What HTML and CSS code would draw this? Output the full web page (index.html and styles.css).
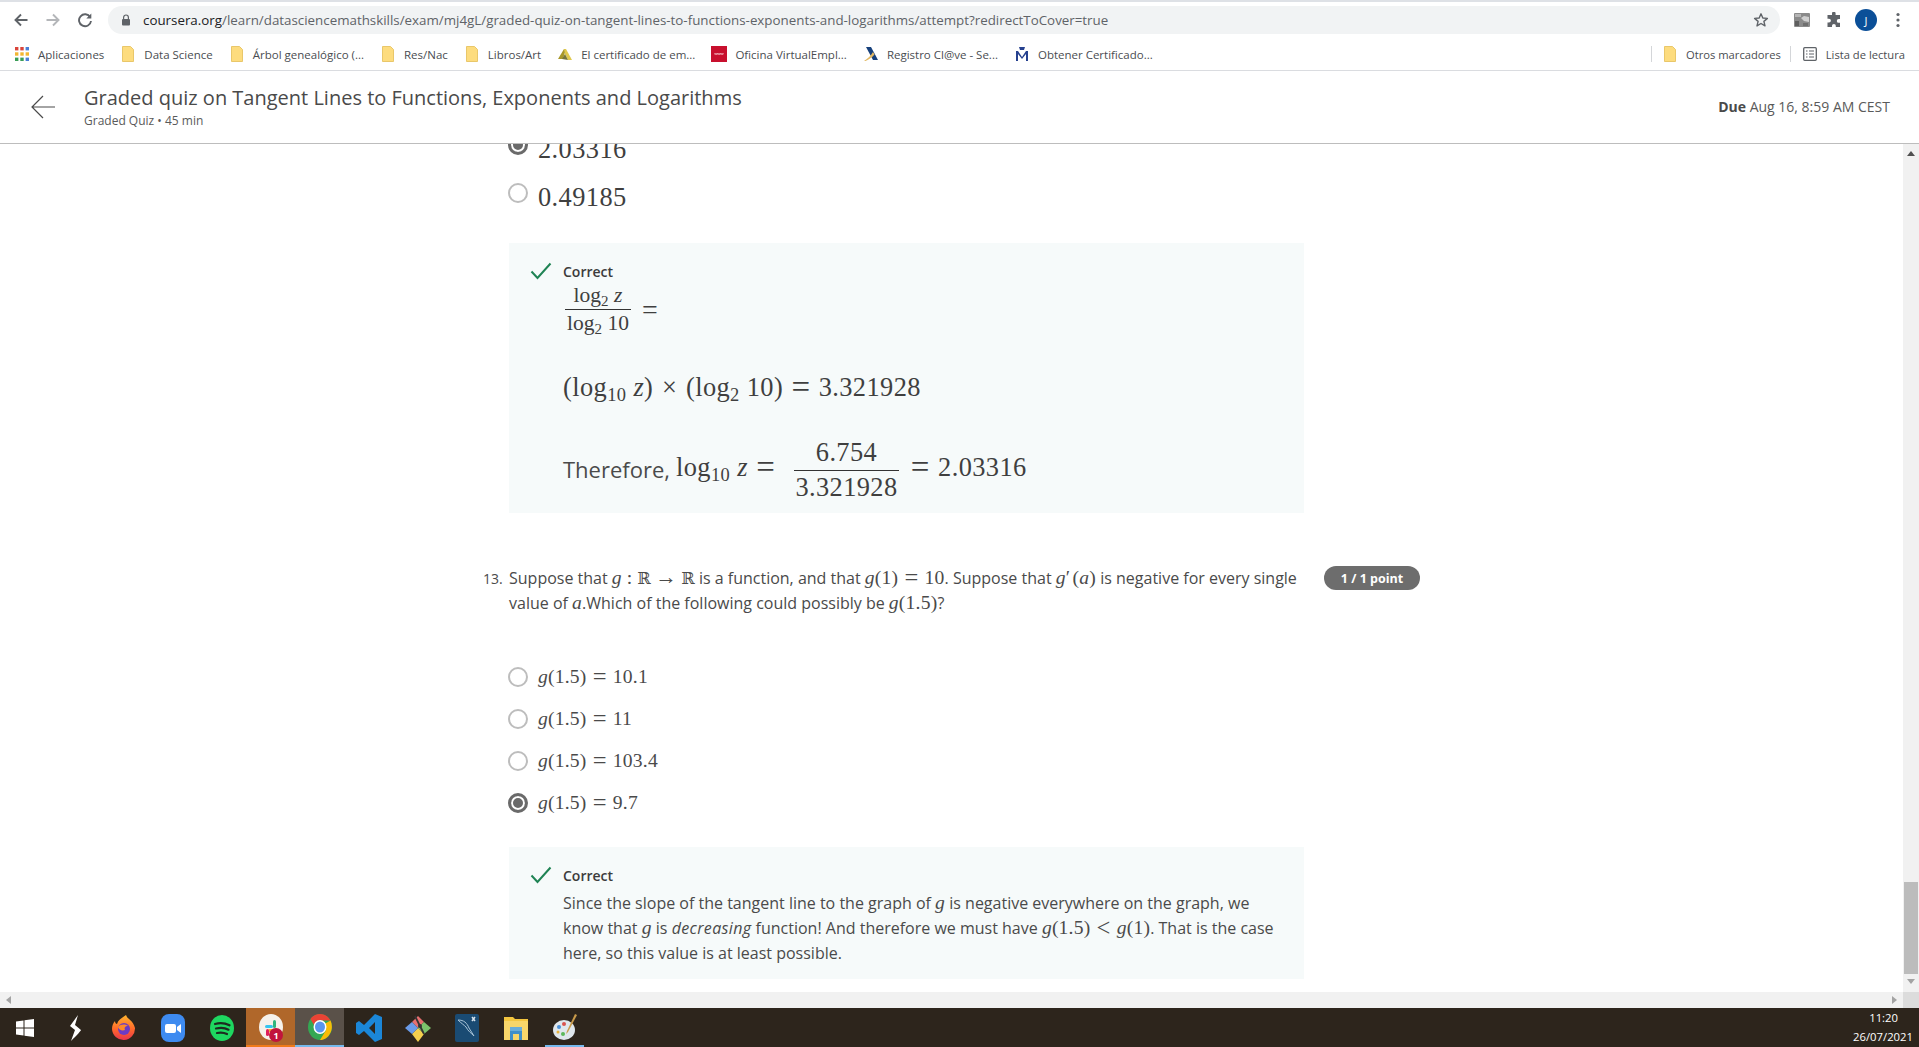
FILE: index.html
```html
<!DOCTYPE html>
<html lang="en">
<head>
<meta charset="utf-8">
<title>Graded quiz on Tangent Lines to Functions, Exponents and Logarithms</title>
<link rel="stylesheet" href="styles.css">
</head>
<body>
<div class="browser">
  <div class="tabstrip"></div>
  <div class="toolbar">
    <span class="tool"><svg width="16" height="16" viewBox="0 0 16 16"><path d="M14.5 8H2.5M8 2.5 2.5 8 8 13.5" fill="none" stroke="#5f6368" stroke-width="1.9"/></svg></span>
    <span class="tool"><svg width="16" height="16" viewBox="0 0 16 16"><path d="M1.5 8h12M8 2.5 13.5 8 8 13.5" fill="none" stroke="#b4b6b9" stroke-width="1.9"/></svg></span>
    <span class="tool"><svg width="16" height="16" viewBox="0 0 16 16"><path d="M13.2 5.2A6 6 0 1 0 14 9" fill="none" stroke="#5f6368" stroke-width="1.9"/><path d="M14.3 1.6v5h-5z" fill="#5f6368"/></svg></span>
    <div class="omnibox">
      <svg class="lock" width="10" height="12" viewBox="0 0 10 12"><path d="M2.6 5V3.4a2.4 2.4 0 0 1 4.8 0V5" fill="none" stroke="#5f6368" stroke-width="1.2"/><rect x="1" y="5" width="8" height="6.6" rx="1" fill="#5f6368"/></svg>
      <span class="url"><span class="host">coursera.org</span>/learn/datasciencemathskills/exam/mj4gL/graded-quiz-on-tangent-lines-to-functions-exponents-and-logarithms/attempt?redirectToCover=true</span>
      <svg class="star" width="16" height="16" viewBox="0 0 16 16"><path d="M8 1.8 9.8 6l4.6.4-3.5 3 1.1 4.5L8 11.500 4 13.900l1.100-4.500-3.500-3L6.200 6z" fill="none" stroke="#5f6368" stroke-width="1.400" stroke-linejoin="round"/></svg>
    </div>
    <span class="tool"><svg width="16" height="14" viewBox="0 0 16 14"><rect width="16" height="14" rx="1" fill="#8a8a8a"/><path d="M1 1h6v3H1z" fill="#b5b5b5"/><path d="M7 5l3-2 5 1v5l-5-1z" fill="#cfcfcf"/><rect x="1" y="8" width="4" height="5" fill="#5f5f5f"/><rect x="9" y="10" width="5" height="3" fill="#6f6f6f"/></svg></span>
    <span class="tool"><svg width="16" height="16" viewBox="0 0 16 16"><path d="M6 1.500a1.800 1.800 0 0 1 3.600 0V3H14v4h-1.300a1.900 1.900 0 0 0 0 3.800H14V15H9.800v-1.200a1.900 1.900 0 0 0-3.800 0V15H1.500v-4.500H3a1.900 1.900 0 0 0 0-3.800H1.500V3H6z" fill="#5f6368"/></svg></span>
    <span class="tool"><span class="avatar">J</span></span>
    <span class="tool"><svg width="4" height="16" viewBox="0 0 4 16"><circle cx="2" cy="2.500" r="1.600" fill="#5f6368"/><circle cx="2" cy="8" r="1.600" fill="#5f6368"/><circle cx="2" cy="13.500" r="1.600" fill="#5f6368"/></svg></span>
  </div>
  <div class="bookmarks">
    <div class="bm bm-apps">
      <svg width="14" height="14" viewBox="0 0 14 14"><g fill="#d9443a"><rect width="3.400" height="3.400"/><rect x="5.300" width="3.400" height="3.400"/><rect x="10.600" width="3.400" height="3.400" fill="#4a7fd6"/></g><g fill="#f2b632"><rect y="5.300" width="3.400" height="3.400"/><rect x="5.300" y="5.300" width="3.400" height="3.400"/><rect x="10.600" y="5.300" width="3.400" height="3.400"/></g><g fill="#3a9d57"><rect y="10.600" width="3.400" height="3.400"/><rect x="5.300" y="10.600" width="3.400" height="3.400"/><rect x="10.600" y="10.600" width="3.400" height="3.400" fill="#4a7fd6"/></g></svg>
      <span>Aplicaciones</span>
    </div>
    <div class="bm"><svg class="folder" width="12" height="16" viewBox="0 0 12 16"><path d="M.5.500h8l3 3v12H.5z" fill="#fddc7e" stroke="#e9c76a"/></svg><span>Data Science</span></div>
    <div class="bm"><svg class="folder" width="12" height="16" viewBox="0 0 12 16"><path d="M.5.500h8l3 3v12H.5z" fill="#fddc7e" stroke="#e9c76a"/></svg><span>Árbol genealógico (...</span></div>
    <div class="bm"><svg class="folder" width="12" height="16" viewBox="0 0 12 16"><path d="M.5.500h8l3 3v12H.5z" fill="#fddc7e" stroke="#e9c76a"/></svg><span>Res/Nac</span></div>
    <div class="bm"><svg class="folder" width="12" height="16" viewBox="0 0 12 16"><path d="M.5.500h8l3 3v12H.5z" fill="#fddc7e" stroke="#e9c76a"/></svg><span>Libros/Art</span></div>
    <div class="bm bm-fav"><svg width="16" height="16" viewBox="0 0 16 16"><path d="M1 13 7 3l2 0-3 10z" fill="#a8982a"/><path d="M7 3h2l6 11h-4L8 8z" fill="#e0c94e"/><path d="M5 13l3-5 3 6z" fill="#77763a"/></svg><span>El certificado de em...</span></div>
    <div class="bm bm-fav"><svg width="16" height="16" viewBox="0 0 16 16"><rect width="16" height="16" fill="#c8102e"/><path d="M3.500 7l.7 1.800L5 7l.7 1.800L6.500 7l.7 1.800L8 7l.7 1.800L9.500 7l.7 1.800L11 7l.7 1.800.8-1.800" fill="none" stroke="#f6c9cf" stroke-width=".6"/></svg><span>Oficina VirtualEmpl...</span></div>
    <div class="bm bm-fav"><svg width="16" height="16" viewBox="0 0 16 16"><path d="M3 1h5l7 13h-5z" fill="#17417c"/><path d="M1 15c3-2 7-5 9-9l1.500 2.500C9 11.500 5 14 2.500 15z" fill="#e2b862"/></svg><span>Registro Cl@ve - Se...</span></div>
    <div class="bm bm-fav"><svg width="16" height="16" viewBox="0 0 16 16"><path d="M5 1h6l-1 3H6z" fill="#26418f"/><path d="M2 15V5h2l4 6 4-6h2v10h-2V8l-4 5-4-5v7z" fill="#26418f"/></svg><span>Obtener Certificado...</span></div>
    <div class="bm-right">
      <span class="bm-sep"></span>
      <div class="bm bm-others"><svg class="folder" width="12" height="16" viewBox="0 0 12 16"><path d="M.5.500h8l3 3v12H.5z" fill="#fddc7e" stroke="#e9c76a"/></svg><span>Otros marcadores</span></div>
      <span class="bm-sep"></span>
      <div class="bm bm-list"><svg width="14" height="14" viewBox="0 0 14 14"><rect x=".7" y=".7" width="12.600" height="12.600" rx="1" fill="none" stroke="#5f6368" stroke-width="1.300"/><path d="M3 4h1.500M3 7h1.500M3 10h1.500M6 4h5M6 7h5M6 10h5" stroke="#5f6368" stroke-width="1.200"/></svg><span>Lista de lectura</span></div>
    </div>
  </div>
</div>

<header class="quiz-header">
  <svg class="back" width="26" height="24" viewBox="0 0 26 24"><path d="M25 12H2M13 1 2 12l11 11" fill="none" stroke="#4a4a4a" stroke-width="1.200"/></svg>
  <div class="quiz-title">
    <h1>Graded quiz on Tangent Lines to Functions, Exponents and Logarithms</h1>
    <p>Graded Quiz • 45 min</p>
  </div>
  <div class="due"><b>Due</b> Aug 16, 8:59 AM CEST</div>
</header>

<div class="viewport">
  <main class="page">
    <div class="sheet">
      <div class="option big opt-clipped"><span class="radio on"></span><span class="mn">2.03316</span></div>
      <div class="option big"><span class="radio"></span><span class="mn">0.49185</span></div>

      <section class="feedback fb-first">
        <svg class="tick" width="22" height="18" viewBox="0 0 22 18"><path d="M1.500 9.500 7.500 16 20.500 1.500" fill="none" stroke="#1f8354" stroke-width="2"/></svg>
        <div class="fb-body">
          <div class="fb-label">Correct</div>
          <div class="eq eq-a">
            <span class="frac"><span class="num">log<sub>2</sub> <i>z</i></span><span class="den">log<sub>2</sub> 10</span></span><span class="rel">=</span>
          </div>
          <div class="eq eq-b"><span class="mn">(log<sub>10</sub> <i>z</i>)<span class="bin">×</span>(log<sub>2</sub> 10)<span class="rel">=</span>3.321928</span></div>
          <div class="eq eq-c"><span class="lead">Therefore,</span><span class="mn">log<sub>10</sub> <i>z</i><span class="rel">=</span><span class="frac"><span class="num">6.754</span><span class="den">3.321928</span></span><span class="rel">=</span>2.03316</span></div>
        </div>
      </section>

      <section class="question">
        <span class="qnum">13.</span>
        <p class="qtext">Suppose that <span class="m"><i>g</i><span class="colon">:</span><span class="bb">ℝ</span><span class="rel rel-arrow">→</span><span class="bb">ℝ</span></span> is a function, and that <span class="m"><i>g</i>(1)<span class="rel">=</span>10</span>. Suppose that <span class="m"><i>g</i><span class="prime">′</span>(<i>a</i>)</span> is negative for every single value of <span class="m"><i>a</i></span>.Which of the following could possibly be <span class="m"><i>g</i>(1.5)</span>?</p>
        <span class="pill">1 / 1 point</span>
      </section>

      <div class="options">
        <div class="option"><span class="radio"></span><span class="m opt"><i>g</i>(1.5)<span class="rel">=</span>10.1</span></div>
        <div class="option"><span class="radio"></span><span class="m opt"><i>g</i>(1.5)<span class="rel">=</span>11</span></div>
        <div class="option"><span class="radio"></span><span class="m opt"><i>g</i>(1.5)<span class="rel">=</span>103.4</span></div>
        <div class="option"><span class="radio on"></span><span class="m opt"><i>g</i>(1.5)<span class="rel">=</span>9.7</span></div>
      </div>

      <section class="feedback fb-second">
        <svg class="tick" width="22" height="18" viewBox="0 0 22 18"><path d="M1.500 9.500 7.500 16 20.500 1.500" fill="none" stroke="#1f8354" stroke-width="2"/></svg>
        <div class="fb-body">
          <div class="fb-label">Correct</div>
          <p class="fb-text">Since the slope of the tangent line to the graph of <span class="m"><i>g</i></span> is negative everywhere on the graph, we know that <span class="m"><i>g</i></span> is <em>decreasing</em> function! And therefore we must have <span class="m"><i>g</i>(1.5)<span class="rel">&lt;</span><i>g</i>(1)</span>. That is the case here, so this value is at least possible.</p>
        </div>
      </section>
    </div>
  </main>
  <div class="vscroll">
    <svg class="arrow" width="8" height="5" viewBox="0 0 8 5"><path d="M4 0l4 5H0z" fill="#505050"/></svg>
    <span class="vthumb"></span>
    <svg class="arrow" width="8" height="5" viewBox="0 0 8 5"><path d="M4 5 8 0H0z" fill="#a3a3a3"/></svg>
  </div>
  <div class="hscroll">
    <svg width="5" height="8" viewBox="0 0 5 8"><path d="M0 4l5-4v8z" fill="#a3a3a3"/></svg>
    <svg width="5" height="8" viewBox="0 0 5 8"><path d="M5 4 0 0v8z" fill="#a3a3a3"/></svg>
  </div>
  <div class="corner"></div>
</div>

<footer class="taskbar">
  <span class="cell cell-first"><svg width="18" height="18" viewBox="0 0 18 18"><path d="M0 2.500 7.500 1.400V8.500H0zM8.500 1.300 18 0v8.500H8.500zM0 9.500h7.500v7.100L0 15.500zM8.500 9.500H18V18l-9.500-1.300z" fill="#fff"/></svg></span>
  <span class="cell"><svg width="12" height="26" viewBox="0 0 12 26"><path d="M9 0 1 11l5 4-4 11c2-2 10-10 10-11L6 10z" fill="#fff"/></svg></span>
  <span class="cell"><svg width="24" height="26" viewBox="0 0 24 26"><defs><linearGradient id="ff" x1="0" y1="0" x2="0" y2="1"><stop offset="0" stop-color="#ffb52e"/><stop offset=".55" stop-color="#ff6a2a"/><stop offset="1" stop-color="#e8354c"/></linearGradient></defs><path d="M14 0c1 4 7 5 9 13a11.500 11.500 0 1 1-23 1c0-3 1-6 3-8 0 2 1 3 2 3 1-4 5-6 9-9z" fill="url(#ff)"/><circle cx="12" cy="14" r="6" fill="#6b3bc4"/><path d="M6 12c3-3 7-3 10-1-3 0-4 2-3 4-3 1-6 0-7-3z" fill="#ff8a2a"/></svg></span>
  <span class="cell"><svg width="24" height="28" viewBox="0 0 24 28"><rect width="24" height="28" rx="8" fill="#3e8bf0"/><rect x="4" y="10" width="11" height="9" rx="2" fill="#fff"/><path d="M16 13l4-3v9l-4-3z" fill="#fff"/></svg></span>
  <span class="cell"><svg width="24" height="26" viewBox="0 0 24 26"><ellipse cx="12" cy="13" rx="12" ry="13" fill="#1ed760"/><path d="M5 9c5-1.500 10-1 14.500 1.300M6 13.500c4-1 9-.8 12.500 1.200M7 18c3.500-.8 7-.5 10 1" fill="none" stroke="#1d2b20" stroke-width="2.200" stroke-linecap="round"/></svg></span>
  <span class="cell cell-slack">
    <svg width="24" height="26" viewBox="0 0 24 26"><ellipse cx="12" cy="13" rx="12" ry="13" fill="#f6f1ea"/><rect x="6" y="11" width="8" height="3" rx="1.500" fill="#36c5f0"/><rect x="14" y="6" width="3" height="8" rx="1.500" fill="#2eb67d"/><rect x="9" y="15" width="8" height="3" rx="1.500" fill="#ecb22e"/><rect x="7" y="15" width="3" height="7" rx="1.500" fill="#e01e5a"/></svg>
    <span class="badge">1</span>
  </span>
  <span class="cell cell-active"><svg width="24" height="26" viewBox="0 0 24 26"><ellipse cx="12" cy="13" rx="12" ry="13" fill="#34a853"/><path d="M12 0c4.500 0 8.500 2.600 10.500 6.500H12C9 6.500 6.500 8.500 6 11L2.400 5C4.600 2 8 0 12 0z" fill="#ea4335"/><path d="M22.500 6.500C24.500 11 24.300 15.500 22 19.500 20 23.500 16.500 26 12 26l5.500-9c1-2 1-5-1-7z" fill="#fbbc05"/><ellipse cx="12" cy="13" rx="6.500" ry="7" fill="#fff"/><ellipse cx="12" cy="13" rx="5" ry="5.500" fill="#5a95ee"/></svg></span>
  <span class="cell"><svg width="26" height="28" viewBox="0 0 26 28"><path d="M19 0l7 3v22l-7 3L8 17 3 21l-3-2V9l3-2 5 4zm0 8-6 6 6 6z" fill="#1b87d8"/></svg></span>
  <span class="cell"><svg width="26" height="28" viewBox="0 0 26 28"><path d="M13 14 7 8l6-6 6 6z" fill="#e76f6f"/><path d="M13 14l6-6 7 6-7 6z" fill="#7cc36c"/><path d="M13 14l6 6-6 8-6-8z" fill="#f4cf4e"/><path d="M13 14l-6 6-7-6 7-6z" fill="#6a9be8"/><path d="M10 2l9 18" stroke="#333" stroke-width="1.800"/><circle cx="15" cy="12" r="2" fill="#333"/></svg></span>
  <span class="cell"><svg width="24" height="28" viewBox="0 0 24 28"><rect width="24" height="28" rx="2" fill="#1a4b73"/><path d="M3 6c6 0 9 3 11 8l5 8c-3-3-6-5-8-9-2-2-5-4-8-7z" fill="none" stroke="#a9c4d8" stroke-width="1"/><path d="M17 3l3 4m0-4-3 4" stroke="#d7e3ec" stroke-width="1.500"/></svg></span>
  <span class="cell"><svg width="24" height="24" viewBox="0 0 24 24"><path d="M0 1h9l2 2h13v4H0z" fill="#f4c63f"/><rect y="5" width="24" height="19" fill="#f7d66a"/><path d="M6 14h12v10h-3v-6H9v6H6z" fill="#3f8fc9"/><rect x="6" y="11" width="12" height="4" fill="#69add9"/></svg></span>
  <span class="cell cell-open"><svg width="24" height="28" viewBox="0 0 24 28"><ellipse cx="11" cy="16" rx="11" ry="10" fill="#dfe7ec"/><circle cx="6" cy="13" r="2" fill="#4a90d9"/><circle cx="10" cy="20" r="2" fill="#5cb85c"/><circle cx="5" cy="18" r="1.500" fill="#e8b23a"/><circle cx="11" cy="10" r="2" fill="#d9534f"/><path d="M22 0l2 1-9 17-2 2 1-3z" fill="#c99b4a"/></svg></span>
  <div class="clock"><span>11:20</span><span>26/07/2021</span></div>
</footer>
</body>
</html>
```
FILE: styles.css
```css
* { box-sizing: border-box; }
html, body { margin: 0; height: 100%; overflow: hidden; background: #fff; }
body { display: flex; flex-direction: column; height: 1047px; font-family: "Open Sans", "Liberation Sans", sans-serif; color: #4a4a4a; }

.browser { flex: none; height: 71px; border-bottom: 1px solid #dadce0; background: #fff; }
.tabstrip { height: 2px; background: #dee1e6; }
.toolbar { display: flex; align-items: center; height: 32px; padding: 0 5px; margin-top: 2px; }
.tool { flex: none; width: 32px; height: 28px; display: flex; align-items: center; justify-content: center; }
.omnibox { flex: 1; height: 28px; margin: 0 6px 0 7px; padding: 0 10px 0 13px; display: flex; align-items: center; background: #f1f3f4; border-radius: 14px; }
.lock { flex: none; margin-right: 12px; }
.url { flex: 1; white-space: nowrap; overflow: hidden; font-size: 13.35px; color: #5f6368; }
.host { color: #202124; }
.star { flex: none; margin-right: 1px; }
.avatar { width: 22px; height: 22px; border-radius: 50%; background: #0b4f98; color: #fff; font-size: 11px; display: flex; align-items: center; justify-content: center; }

.bookmarks { display: flex; align-items: center; height: 36px; padding-left: 15px; font-size: 11.5px; color: #4a4d51; gap: 18px; }
.bm { display: flex; align-items: center; gap: 10px; white-space: nowrap; }
.bm svg { flex: none; }
.bm-apps { gap: 9px; }
.bm-fav { gap: 8px; margin-left: -2px; }
.bm-right { margin-left: auto; display: flex; align-items: center; gap: 12px; padding-right: 14px; font-size: 11.2px; }
.bm-others { margin-right: -3px; }
.bm-list { gap: 9px; }
.bm-sep { width: 1px; height: 16px; background: #d4d6d9; }

.quiz-header { flex: none; height: 73px; display: flex; align-items: center; padding: 0 29px 0 30px; border-bottom: 1px solid #bdbdbd; background: #fff; }
.back { flex: none; margin-right: 28px; }
.quiz-title { flex: 1; margin-top: -1px; }
.quiz-title h1 { margin: 0 0 1px; font-size: 20px; font-weight: 400; line-height: 28px; color: #4a4a4a; }
.quiz-title p { margin: 0; font-size: 12px; line-height: 16px; color: #5a5a5a; }
.due { margin-top: -2px; font-size: 14px; color: #5a5a5a; }
.due b { color: #4a4a4a; font-weight: 700; }

.viewport { flex: none; height: 864px; display: grid; grid-template-columns: 1903px 16px; grid-template-rows: 848px 16px; }
.page { overflow: hidden; }
.sheet { padding-left: 475px; margin-top: -17px; width: 1440px; }

.m, .mn, .frac, .rel { font-family: "Liberation Serif", "DejaVu Serif", serif; }
.m { font-size: 19.6px; line-height: 1; letter-spacing: .2px; color: #4a4a4a; }
.bb { font-family: "DejaVu Serif", serif; font-size: .82em; }
.colon { margin: 0 .25em; }
.prime { margin-right: .12em; }
.mn { font-size: 26.4px; letter-spacing: .4px; color: #3f3f3f; white-space: nowrap; }
sub { font-size: .7em; line-height: 0; vertical-align: -.28em; }

.option { display: flex; align-items: center; margin-left: 33px; height: 42px; }
.option.big { height: 47px; }
.option.big .radio { margin-top: -9px; }
.opt-clipped { position: relative; top: -1px; }
.radio { flex: none; width: 20px; height: 20px; margin-right: 10px; border: 2px solid #bdbdbd; border-radius: 50%; background: #fff; }
.radio.on { border: 3px solid #6a6a6a; box-shadow: inset 0 0 0 2px #fff; background: #6a6a6a; background-clip: padding-box; }

.feedback { margin-left: 34px; width: 795px; display: flex; background: #f6fafa; padding-left: 21px; }
.fb-first { margin-top: 22px; height: 270px; padding-top: 17px; }
.fb-second { margin-top: 23px; height: 132px; padding-top: 17px; }
.tick { flex: none; margin: 2px 11px 0 0; }
.fb-body { flex: 1; padding-right: 20px; }
.fb-label { font-size: 14px; font-weight: 600; line-height: 24px; color: #3c3c3c; }
.fb-text { margin: 3px 0 0; font-size: 16px; line-height: 25px; }
.fb-text em { letter-spacing: .35px; }

.eq { display: flex; align-items: center; }
.eq-a { height: 50px; margin: 1px 0 0 2px; font-size: 21.5px; color: #3f3f3f; }
.eq-b { height: 50px; margin-top: 27px; }
.eq-c { height: 68px; margin-top: 24px; }
.lead { font-size: 22px; margin: -2px 6px 0 0; }
.frac { display: inline-flex; flex-direction: column; align-items: stretch; text-align: center; vertical-align: middle; white-space: nowrap; }
.num { padding: 0 2px 1px; line-height: 1.1; border-bottom: 1px solid #333; }
.den { padding: 2px 2px 0; line-height: 1.1; }
.eq-c .num { padding: 0 1px 3px; }
.eq-c .den { padding: 2px 1px 0; }
.eq-c .frac { margin: 0 4px 0 11px; }
.rel { font-size: 1.25em; line-height: 0; margin: 0 .25em; vertical-align: -.07em; }
.rel-arrow { font-size: 1.1em; margin: 0 .2em; vertical-align: baseline; }
.eq-a .rel { margin-left: .4em; font-size: 1.3em; }
.bin { margin: 0 .33em; }

.question { position: relative; display: flex; margin-top: 53px; height: 90px; }
.qnum { flex: none; width: 34px; padding-top: 3px; font-size: 14px; line-height: 20px; text-align: left; margin-left: 8px; margin-right: -8px; }
.qtext { margin: 0; width: 795px; font-size: 16px; line-height: 25px; }
.pill { position: absolute; left: 849px; top: 0; width: 96px; height: 24px; border-radius: 12px; background: #6d6d6d; color: #fff; font-size: 12.500px; font-weight: 700; display: flex; align-items: center; justify-content: center; }

.vscroll { grid-column: 2; grid-row: 1; background: #f1f1f1; display: flex; flex-direction: column; align-items: center; padding: 7px 0 8px; }
.vthumb { width: 14px; height: 92px; margin-top: auto; margin-bottom: 5px; background: #bcbcbc; }
.hscroll { grid-column: 1; grid-row: 2; background: #f1f1f1; display: flex; align-items: center; justify-content: space-between; padding: 0 6px; }
.corner { grid-column: 2; grid-row: 2; background: #dcdcdc; }

.taskbar { flex: 1; display: flex; background: #2d251c; color: #fff; min-height: 39px; }
.cell { position: relative; flex: none; width: 49px; display: flex; align-items: center; justify-content: center; }
.cell-first { width: 50px; }
.cell-slack { background: #b0672a; border-bottom: 2px solid #f07a1a; }
.cell-active { background: #5a5149; border-bottom: 2px solid #76b9ed; }
.cell-open::after { content: ""; position: absolute; left: 5px; right: 5px; bottom: 0; height: 2px; background: #76b9ed; }
.badge { position: absolute; left: 23px; top: 20px; width: 14px; height: 14px; border-radius: 50%; background: #c1143c; color: #fff; font-size: 9px; font-weight: 700; display: flex; align-items: center; justify-content: center; }
.clock { margin-left: auto; padding: 0 6px 0 0; display: flex; flex-direction: column; align-items: flex-end; justify-content: center; gap: 3px; font-size: 11.300px; line-height: 16px; }
.clock span:first-child { margin-right: 15px; }
```
